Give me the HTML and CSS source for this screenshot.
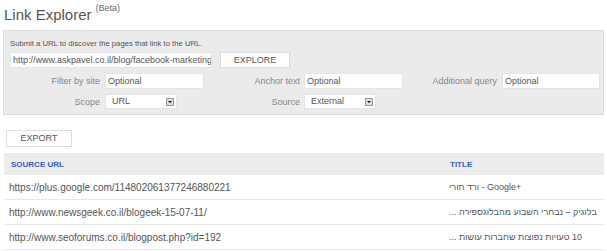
FILE: index.html
```html
<!DOCTYPE html>
<html lang="en">

<head>
    <meta charset="UTF-8">
    <meta name="viewport" content="width=device-width, initial-scale=1.0">
    <title>Link Explorer</title>
    <link rel="stylesheet" href="styles.css">
</head>

<body>
    <div class="page">
        <div class="title">
            <span class="title_main">Link Explorer</span>
            <span class="title_beta">(Beta)</span>
        </div>

        <div class="panel">
            <div class="hint">Submit a URL to discover the pages that link to the URL.</div>
            <div class="url_row">
                <div class="field url_field">http://www.askpavel.co.il/blog/facebook-marketing</div>
                <div class="btn explore_btn">EXPLORE</div>
            </div>
            <div class="filters">
                <div class="label">Filter by site</div>
                <div class="field">Optional</div>
                <div class="label">Anchor text</div>
                <div class="field">Optional</div>
                <div class="label">Additional query</div>
                <div class="field">Optional</div>

                <div class="label">Scope</div>
                <div class="select">URL<span class="arrow"></span></div>
                <div class="label">Source</div>
                <div class="select">External<span class="arrow"></span></div>
            </div>
        </div>

        <div class="btn export_btn">EXPORT</div>

        <div class="results">
            <div class="row head">
                <div class="cell">SOURCE URL</div>
                <div class="cell">TITLE</div>
            </div>
            <div class="row">
                <div class="cell">https://plus.google.com/114802061377246880221</div>
                <div class="cell title_cell">ורד חורי - Google+</div>
            </div>
            <div class="row">
                <div class="cell">http://www.newsgeek.co.il/blogeek-15-07-11/</div>
                <div class="cell title_cell"><span dir="rtl">בלוגיק – נבחרי השבוע מהבלוגספירה ...</span></div>
            </div>
            <div class="row">
                <div class="cell">http://www.seoforums.co.il/blogpost.php?id=192</div>
                <div class="cell title_cell"><span dir="rtl">10 טעויות נפוצות שחברות עושות ...</span></div>
            </div>
        </div>
    </div>
</body>

</html>
```

FILE: styles.css
```css
body {
    margin: 0;
    background-color: #ffffff;
    color: #555555;
    font-family: "Liberation Sans", Arial, sans-serif;
}

.page {
    padding: 0 3px;
}

.title {
    display: flex;
    align-items: flex-start;
    gap: 4px;
    padding: 2px 0 0 1px;
    height: 28px;
    box-sizing: border-box;
}

.title_main {
    margin-top: 4px;
    font-size: 15px;
    line-height: 18px;
    color: #555555;
}

.title_beta {
    margin-top: 1px;
    font-size: 9px;
    line-height: 11px;
    color: #666666;
}

.panel {
    margin-top: 2px;
    background-color: #ebebeb;
    border: 1px solid #dddddd;
    padding: 8px 6px 6px 6px;
    height: 85px;
    box-sizing: border-box;
}

.hint {
    font-size: 7.7px;
    line-height: 10px;
    color: #555555;
}

.url_row {
    display: flex;
    gap: 8px;
    margin-top: 3px;
}

.field {
    height: 16px;
    box-sizing: border-box;
    background-color: #ffffff;
    border: 1px solid #e4e4e4;
    padding: 0 2px;
    font-size: 9px;
    line-height: 14px;
    color: #555555;
    white-space: nowrap;
    overflow: hidden;
}

.url_field {
    width: 202px;
}

.btn {
    height: 16px;
    box-sizing: border-box;
    background-color: #ffffff;
    border: 1px solid #dcdcdc;
    font-size: 9px;
    line-height: 14px;
    text-align: center;
    color: #555555;
}

.explore_btn {
    width: 70px;
}

.filters {
    display: grid;
    grid-template-columns: 95px 99px 100px 99px 99px 98px;
    row-gap: 5px;
    margin-top: 5px;
}

.label {
    text-align: right;
    padding-right: 5px;
    font-size: 9px;
    line-height: 16px;
    color: #888888;
}

.filters .label:nth-child(3),
.filters .label:nth-child(9) {
    padding-right: 4px;
}

.select {
    position: relative;
    width: 72px;
    height: 15px;
    box-sizing: border-box;
    background-color: #ffffff;
    border: 1px solid #e4e4e4;
    padding-left: 6px;
    font-size: 9px;
    line-height: 13px;
    color: #555555;
}

.arrow {
    position: absolute;
    right: 2px;
    top: 3px;
    width: 8px;
    height: 8px;
    box-sizing: border-box;
    background-color: #dedede;
    border: 1px solid #9a9a9a;
}

.arrow::after {
    content: "";
    position: absolute;
    left: 1px;
    top: 2px;
    border-left: 2px solid transparent;
    border-right: 2px solid transparent;
    border-top: 2px solid #111111;
}

.export_btn {
    width: 66px;
    margin: 15px 0 0 3px;
    height: 17px;
    line-height: 15px;
}

.results {
    margin: 6px 0 0 1px;
}

.row {
    display: grid;
    grid-template-columns: 439px 1fr;
    height: 25px;
    box-sizing: border-box;
    border-bottom: 1px solid #e6e6e6;
    align-items: center;
    font-size: 10px;
    color: #555555;
}

.row .cell {
    padding-left: 5px;
    white-space: nowrap;
    overflow: hidden;
}

.row .title_cell {
    padding-left: 6px;
    font-size: 9px;
}

.row.head {
    height: 22px;
    background-color: #ececec;
    border-bottom: none;
    font-size: 8px;
    font-weight: bold;
    color: #3a5bc7;
}

.row.head .cell {
    padding-left: 7px;
}
```
